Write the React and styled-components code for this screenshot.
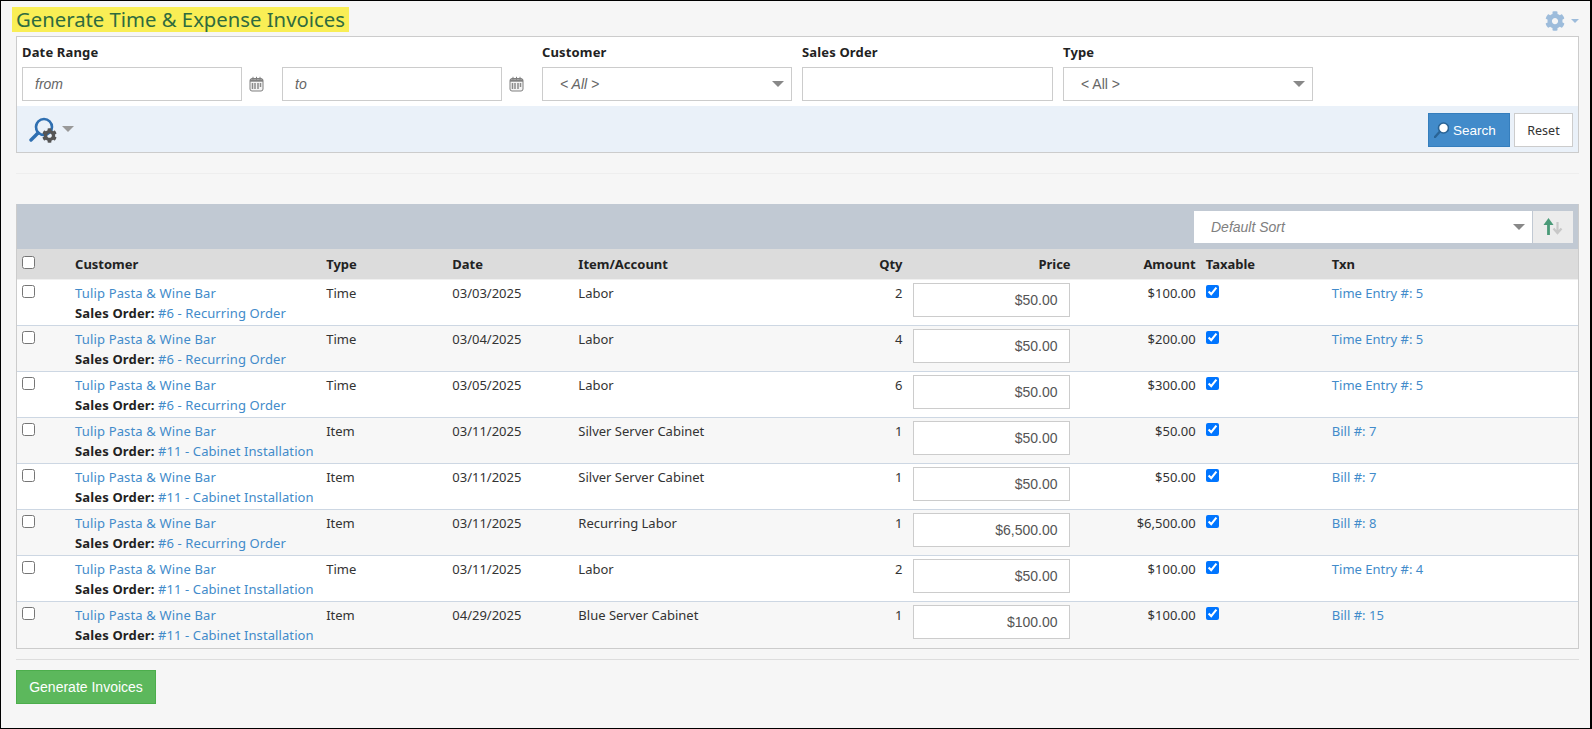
import React from 'react';
import styled, { createGlobalStyle } from 'styled-components';
import { FaCog } from 'react-icons/fa';

const BODY_FONT = '"Noto Sans", "Open Sans", sans-serif';
const FIELD_FONT = '"Liberation Sans", Arial, sans-serif';

const GlobalStyle = createGlobalStyle`
  * { box-sizing: border-box; }
  html, body { margin: 0; padding: 0; background: #ffffff; }
  body { font-family: ${BODY_FONT}; font-size: 13px; color: #333333; }
`;

const Page = styled.div`
  width: 1592px;
  height: 729px;
  overflow: hidden;
  background: #f6f6f6;
  border: 1px solid #000000;
  border-right-width: 2px;
  padding: 6px 11px 0 15px;
`;

const TitleRow = styled.div`
  display: flex;
  justify-content: space-between;
  align-items: flex-start;
  height: 25px;
  margin-left: -4px;
`;

const Title = styled.h1`
  margin: 0;
  padding: 0 4px;
  height: 25px;
  background: #f9ee55;
  color: #2f6b3f;
  font-size: 20.3px;
  font-weight: 400;
  line-height: 25px;
  white-space: nowrap;
`;

const SettingsButton = styled.div`
  display: flex;
  align-items: center;
  gap: 6px;
  margin-top: 4px;
  color: #9dbcdb;
  font-size: 20px;
  line-height: 0;
`;

const Caret = styled.span`
  display: inline-block;
  width: 0;
  height: 0;
  border-left: ${p => p.$size}px solid transparent;
  border-right: ${p => p.$size}px solid transparent;
  border-top: ${p => p.$size}px solid ${p => p.$color};
`;

const FilterPanel = styled.section`
  margin-top: 4px;
  height: 117px;
  background: #ffffff;
  border: 1px solid #cccccc;
`;

const Fields = styled.div`
  display: flex;
  height: 69px;
  padding: 5px 0 0 5px;
`;

const Field = styled.div`
  width: ${p => p.$width}px;
  margin-right: ${p => p.$gap}px;
`;

const Label = styled.label`
  display: block;
  height: 25px;
  font-size: 13px;
  font-weight: 700;
  line-height: 20px;
  letter-spacing: 0.15px;
  color: #222222;
`;

const DateCell = styled.div`
  display: flex;
  align-items: center;
  gap: 7px;
`;

const DateRow = styled.div`
  display: flex;
  gap: 18px;
`;

const TextInput = styled.input`
  display: block;
  width: ${p => p.$width || '100%'};
  height: 34px;
  padding: 0 12px;
  border: 1px solid #cccccc;
  border-radius: 0;
  background: #ffffff;
  font-family: ${FIELD_FONT};
  font-size: 14px;
  color: #555555;
  outline: none;
  &::placeholder { color: #666666; font-style: italic; opacity: 1; }
`;

const SelectBox = styled.div`
  display: flex;
  align-items: center;
  justify-content: space-between;
  height: 34px;
  padding: 0 ${p => p.$right || 7}px 0 ${p => p.$left || 17}px;
  border: 1px solid #cccccc;
  background: #ffffff;
  font-family: ${FIELD_FONT};
  font-size: 14px;
  color: #666666;
  font-style: ${p => (p.$italic ? 'italic' : 'normal')};
`;

const ActionBar = styled.div`
  display: flex;
  align-items: flex-start;
  justify-content: space-between;
  height: 46px;
  padding: 7px 5px 0 12px;
  background: #eaf1f9;
`;

const ToolToggle = styled.div`
  display: flex;
  align-items: flex-start;
  gap: 5px;
  height: 26px;
  margin-top: 4px;
  > span { margin-top: 9px; }
`;

const ActionGroup = styled.div`
  display: flex;
  gap: 4px;
`;

const Button = styled.button`
  display: flex;
  align-items: center;
  justify-content: center;
  height: 34px;
  width: ${p => p.$width}px;
  padding: 0;
  border: 1px solid ${p => p.$border};
  border-radius: 0;
  background: ${p => p.$bg};
  color: ${p => p.$color};
  font-family: ${p => p.$font || FIELD_FONT};
  font-size: ${p => p.$size || 14}px;
`;

const SearchButton = styled(Button)`
  justify-content: flex-start;
  gap: 4px;
  padding-left: 5px;
`;

const Rule = styled.hr`
  margin: ${p => p.$margin};
  border: 0;
  border-top: 1px solid ${p => p.$color};
`;

const GridPanel = styled.section`
  border: 1px solid #cccccc;
  border-top: 0;
  background: #ffffff;
`;

const GridToolbar = styled.div`
  display: flex;
  justify-content: flex-end;
  gap: 1px;
  height: 45px;
  padding: 7px 5px 0 0;
  background: #c1c9d3;
`;

const SortSelect = styled(SelectBox)`
  width: 338px;
  height: 32px;
  border: 0;
  color: #808080;
`;

const SortButton = styled.div`
  display: flex;
  align-items: center;
  justify-content: center;
  width: 40px;
  height: 32px;
  background: #ececec;
`;

const Table = styled.table`
  width: 100%;
  table-layout: fixed;
  border-collapse: separate;
  border-spacing: 0;
`;

const HeadCell = styled.th`
  height: 31px;
  padding: 0 5px 1px;
  background: #dcdcdc;
  border-bottom: 1px solid #f0f0f0;
  font-size: 13px;
  font-weight: 700;
  color: #222222;
  text-align: ${p => p.$align || 'left'};
`;

const Row = styled.tr`
  background: ${p => (p.$alt ? '#f7f7f7' : '#ffffff')};
`;

const Cell = styled.td`
  height: 46px;
  padding: 3px 5px 0;
  border-bottom: 1px solid ${p => (p.$last ? 'transparent' : '#cdd7e3')};
  font-size: 13px;
  line-height: 20px;
  color: #333333;
  vertical-align: top;
  white-space: nowrap;
  text-align: ${p => p.$align || 'left'};
`;

const Link = styled.a`
  color: #428bca;
  text-decoration: none;
`;

const CustomerLink = styled(Link)`
  letter-spacing: 0.15px;
`;

const OrderLink = styled(Link)`
  letter-spacing: 0.1px;
`;

const OrderLine = styled.div`
  font-weight: 400;
  > b { font-weight: 700; color: #222222; letter-spacing: 0.15px; }
`;

const Check = styled.input.attrs({ type: 'checkbox' })`
  display: block;
  width: 13px;
  height: 13px;
  margin: 2px 0 0;
`;

const HeadCheck = styled(Check)`
  margin: -2px 0 0;
`;

const PriceInput = styled(TextInput)`
  text-align: right;
  padding-right: 11px;
`;

const Footer = styled.div`
  padding-top: 10px;
`;

const CalendarIcon = () => (
  <svg width="15" height="16" viewBox="0 0 15 16" fill="none">
    <rect x="1" y="2.5" width="13" height="12.5" rx="2" fill="#f4f4f4" stroke="#808080" />
    <path d="M1 4.5h13" stroke="#808080" strokeWidth="2.4" />
    <path d="M4 .8v3M7.5 .8v3M11 .8v3" stroke="#808080" />
    <path d="M3.5 7v6M6 7v6M9 7v6M11.5 7v4" stroke="#8a8a8a" strokeWidth="1.5" />
  </svg>
);

const SearchToolsIcon = () => (
  <svg width="28" height="26" viewBox="0 0 28 26">
    <circle cx="15" cy="10" r="8" fill="none" stroke="#2f6fb1" strokeWidth="2.6" />
    <path d="M9 16 2 23" stroke="#2f6fb1" strokeWidth="3.4" strokeLinecap="round" />
    <g transform="translate(13 11)">
      <FaCog size={15} color="#555555" />
    </g>
  </svg>
);

const SearchIcon = () => (
  <svg width="15" height="16" viewBox="0 0 15 16">
    <circle cx="9.5" cy="6" r="5" fill="#ffffff" stroke="#2a6496" strokeWidth="1.6" />
    <path d="M5.5 10 1 15" stroke="#2a6496" strokeWidth="2.4" strokeLinecap="round" />
  </svg>
);

const SortIcon = () => (
  <svg width="20" height="18" viewBox="0 0 20 18" fill="none">
    <path d="M14.5 4v11M10.5 10.5l4 4.5 4-4.5" stroke="#c8c8c8" strokeWidth="2.2" />
    <path d="M5.5 17V3" stroke="#4a9a78" strokeWidth="2.8" />
    <path d="M5.5 0 10.5 7H.5z" fill="#4a9a78" />
  </svg>
);

const CUSTOMER = 'Tulip Pasta & Wine Bar';
const RECURRING = '#6 - Recurring Order';
const CABINET = '#11 - Cabinet Installation';

const rows = [
  { order: RECURRING, type: 'Time', date: '03/03/2025', item: 'Labor', qty: 2, price: '$50.00', amount: '$100.00', txn: 'Time Entry #: 5' },
  { order: RECURRING, type: 'Time', date: '03/04/2025', item: 'Labor', qty: 4, price: '$50.00', amount: '$200.00', txn: 'Time Entry #: 5' },
  { order: RECURRING, type: 'Time', date: '03/05/2025', item: 'Labor', qty: 6, price: '$50.00', amount: '$300.00', txn: 'Time Entry #: 5' },
  { order: CABINET, type: 'Item', date: '03/11/2025', item: 'Silver Server Cabinet', qty: 1, price: '$50.00', amount: '$50.00', txn: 'Bill #: 7' },
  { order: CABINET, type: 'Item', date: '03/11/2025', item: 'Silver Server Cabinet', qty: 1, price: '$50.00', amount: '$50.00', txn: 'Bill #: 7' },
  { order: RECURRING, type: 'Item', date: '03/11/2025', item: 'Recurring Labor', qty: 1, price: '$6,500.00', amount: '$6,500.00', txn: 'Bill #: 8' },
  { order: CABINET, type: 'Time', date: '03/11/2025', item: 'Labor', qty: 2, price: '$50.00', amount: '$100.00', txn: 'Time Entry #: 4' },
  { order: CABINET, type: 'Item', date: '04/29/2025', item: 'Blue Server Cabinet', qty: 1, price: '$100.00', amount: '$100.00', txn: 'Bill #: 15' },
];

const columns = [53, 251, 126, 126, 260, 74, 168, 125, 126, 251];

export default function App() {
  return (
    <Page>
      <GlobalStyle />
      <TitleRow>
        <Title>Generate Time &amp; Expense Invoices</Title>
        <SettingsButton>
          <FaCog />
          <Caret $size={4} $color="#9dbcdb" />
        </SettingsButton>
      </TitleRow>

      <FilterPanel>
        <Fields>
          <Field $width={520} $gap={0}>
            <Label>Date Range</Label>
            <DateRow>
              <DateCell>
                <TextInput $width="220px" placeholder="from" />
                <CalendarIcon />
              </DateCell>
              <DateCell>
                <TextInput $width="220px" placeholder="to" />
                <CalendarIcon />
              </DateCell>
            </DateRow>
          </Field>
          <Field $width={250} $gap={10}>
            <Label>Customer</Label>
            <SelectBox $italic>
              &lt; All &gt;
              <Caret $size={6} $color="#888888" />
            </SelectBox>
          </Field>
          <Field $width={251} $gap={10}>
            <Label>Sales Order</Label>
            <TextInput />
          </Field>
          <Field $width={250} $gap={0}>
            <Label>Type</Label>
            <SelectBox>
              &lt; All &gt;
              <Caret $size={6} $color="#888888" />
            </SelectBox>
          </Field>
        </Fields>
        <ActionBar>
          <ToolToggle>
            <SearchToolsIcon />
            <Caret $size={6} $color="#999999" />
          </ToolToggle>
          <ActionGroup>
            <SearchButton $width={82} $bg="#428bca" $border="#357ebd" $color="#ffffff" $size={13.5}>
              <SearchIcon />
              Search
            </SearchButton>
            <Button $width={59} $bg="#ffffff" $border="#cccccc" $color="#333333" $font={BODY_FONT} $size={12.5}>
              Reset
            </Button>
          </ActionGroup>
        </ActionBar>
      </FilterPanel>

      <Rule $margin="20px 0 30px" $color="#eeeeee" />

      <GridPanel>
        <GridToolbar>
          <SortSelect $italic>
            Default Sort
            <Caret $size={6} $color="#888888" />
          </SortSelect>
          <SortButton>
            <SortIcon />
          </SortButton>
        </GridToolbar>
        <Table>
          <colgroup>
            {columns.map((width, i) => <col key={i} width={width} />)}
          </colgroup>
          <thead>
            <tr>
              <HeadCell><HeadCheck /></HeadCell>
              <HeadCell>Customer</HeadCell>
              <HeadCell>Type</HeadCell>
              <HeadCell>Date</HeadCell>
              <HeadCell>Item/Account</HeadCell>
              <HeadCell $align="right">Qty</HeadCell>
              <HeadCell $align="right">Price</HeadCell>
              <HeadCell $align="right">Amount</HeadCell>
              <HeadCell>Taxable</HeadCell>
              <HeadCell>Txn</HeadCell>
            </tr>
          </thead>
          <tbody>
            {rows.map((row, i) => {
              const last = i === rows.length - 1;
              return (
                <Row key={i} $alt={i % 2 === 1}>
                  <Cell $last={last}><Check /></Cell>
                  <Cell $last={last}>
                    <CustomerLink href="#">{CUSTOMER}</CustomerLink>
                    <OrderLine><b>Sales Order:</b> <OrderLink href="#">{row.order}</OrderLink></OrderLine>
                  </Cell>
                  <Cell $last={last}>{row.type}</Cell>
                  <Cell $last={last}>{row.date}</Cell>
                  <Cell $last={last}>{row.item}</Cell>
                  <Cell $last={last} $align="right">{row.qty}</Cell>
                  <Cell $last={last}><PriceInput $width="157px" defaultValue={row.price} /></Cell>
                  <Cell $last={last} $align="right">{row.amount}</Cell>
                  <Cell $last={last}><Check defaultChecked /></Cell>
                  <Cell $last={last}><Link href="#">{row.txn}</Link></Cell>
                </Row>
              );
            })}
          </tbody>
        </Table>
      </GridPanel>

      <Rule $margin="10px 0 0" $color="#dddddd" />

      <Footer>
        <Button $width={140} $bg="#5cb85c" $border="#4cae4c" $color="#ffffff">
          Generate Invoices
        </Button>
      </Footer>
    </Page>
  );
}
